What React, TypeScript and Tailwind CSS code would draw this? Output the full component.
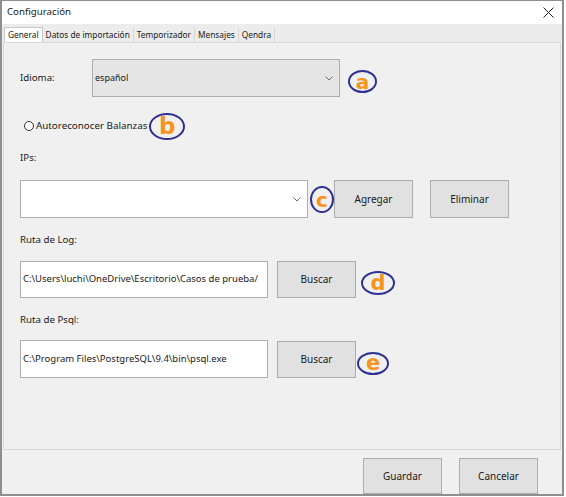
const Chevron = () => (
  <svg width="8" height="5" viewBox="0 0 8 5" fill="none">
    <path d="M0.5 0.5 L4 4 L7.5 0.5" stroke="#6b6b6b" strokeWidth="1" />
  </svg>
);

const Mark = ({ letter, className }: { letter: string; className: string }) => (
  <span
    className={
      "flex shrink-0 items-center justify-center rounded-[50%] border-2 border-[#2e3192] font-['DejaVu_Sans',sans-serif] font-bold leading-none text-[#f7941d] " +
      className
    }
  >
    {letter}
  </span>
);

const Btn = ({ label, className }: { label: string; className: string }) => (
  <button className={"flex shrink-0 items-center justify-center border border-[#adadad] bg-[#e1e1e1] text-[10px] text-[#1a1a1a] " + className}>
    {label}
  </button>
);

export default function App() {
  return (
    <div className="h-[497px] w-[566px] bg-white font-['Noto_Sans',sans-serif] text-[#1a1a1a]">
      <div className="flex h-[496px] w-[564px] flex-col border-x-2 border-b-2 border-t border-[#8f8f8f] bg-[#f0f0f0]">
        {/* title bar */}
        <div className="flex h-[23px] items-center justify-between bg-white pl-[5px] pr-[8px]">
          <span className="text-[9.7px]">Configuración</span>
          <svg width="11" height="11" viewBox="0 0 11 11">
            <path d="M0.5 0.5 L10.5 10.5 M10.5 0.5 L0.5 10.5" stroke="#222" strokeWidth="1" />
          </svg>
        </div>

        {/* tabs */}
        <div className="flex h-[18px] items-end bg-[#ececec] pl-[2px] text-[8.3px]">
          <div className="flex h-[15px] items-center border border-b-0 border-[#c8c8c8] bg-white px-[3px]">General</div>
          <div className="flex h-[14px] items-center border-r border-[#d8d8d8] px-[3px]">Datos de importación</div>
          <div className="flex h-[14px] items-center border-r border-[#d8d8d8] px-[3px]">Temporizador</div>
          <div className="flex h-[14px] items-center border-r border-[#d8d8d8] px-[3px]">Mensajes</div>
          <div className="flex h-[14px] items-center border-r border-[#d8d8d8] px-[3px]">Qendra</div>
        </div>

        {/* tab page */}
        <div className="mx-[1px] flex h-[408px] flex-col border border-[#d9d9d9] bg-[#f0f0f0] pl-[16px] text-[9.7px]">
          <div className="mt-[16px] flex items-start">
            <span className="flex h-[38px] w-[72px] items-center">Idioma:</span>
            <div className="flex h-[38px] w-[248px] items-center justify-between border border-[#adadad] bg-[#e5e5e5] pl-[2px] pr-[6px] text-[9px]">
              <span>español</span>
              <Chevron />
            </div>
            <Mark letter="a" className="ml-[8px] mt-[11px] h-[23px] w-[29px] text-[20px]" />
          </div>

          <div className="mt-[15px] flex h-[28px] items-center pl-[4px]">
            <span className="h-[10px] w-[10px] rounded-full border border-[#333] bg-white" />
            <span className="ml-[2px] text-[9.8px]">Autoreconocer Balanzas</span>
            <Mark letter="b" className="ml-[2px] h-[27px] w-[36px] text-[23px]" />
          </div>

          <span className="mt-[11px] leading-[14px]">IPs:</span>

          <div className="mt-[15px] flex items-start">
            <div className="flex h-[38px] w-[288px] items-center justify-end border border-[#adadad] bg-white pr-[6px]">
              <Chevron />
            </div>
            <Mark letter="c" className="ml-[2px] mt-[6px] h-[27px] w-[24px] text-[20px]" />
            <Btn label="Agregar" className="h-[38px] w-[79px]" />
            <Btn label="Eliminar" className="ml-[17px] h-[38px] w-[79px]" />
          </div>

          <span className="mt-[15px] leading-[14px]">Ruta de Log:</span>

          <div className="mt-[14px] flex items-start">
            <div className="flex h-[37px] w-[248px] items-center border border-[#adadad] bg-white pl-[2px] text-[9.5px]">
              C:\Users\luchi\OneDrive\Escritorio\Casos de prueba/
            </div>
            <Btn label="Buscar" className="ml-[9px] h-[37px] w-[79px]" />
            <Mark letter="d" className="ml-[5px] mt-[10px] h-[24px] w-[34px] text-[21px]" />
          </div>

          <span className="mt-[15px] leading-[14px]">Ruta de Psql:</span>

          <div className="mt-[13px] flex items-start">
            <div className="flex h-[38px] w-[248px] items-center border border-[#adadad] bg-white pl-[2px] text-[9.5px]">
              C:\Program Files\PostgreSQL\9.4\bin\psql.exe
            </div>
            <Btn label="Buscar" className="ml-[9px] mt-[1px] h-[37px] w-[79px]" />
            <Mark letter="e" className="ml-[1px] mt-[12px] h-[23px] w-[32px] text-[21px]" />
          </div>
        </div>

        {/* footer */}
        <div className="flex flex-1 items-end justify-end gap-[17px] pr-[24px]">
          <Btn label="Guardar" className="h-[36px] w-[79px] text-[10.5px]" />
          <Btn label="Cancelar" className="h-[36px] w-[79px] text-[10.5px]" />
        </div>
      </div>
    </div>
  );
}
